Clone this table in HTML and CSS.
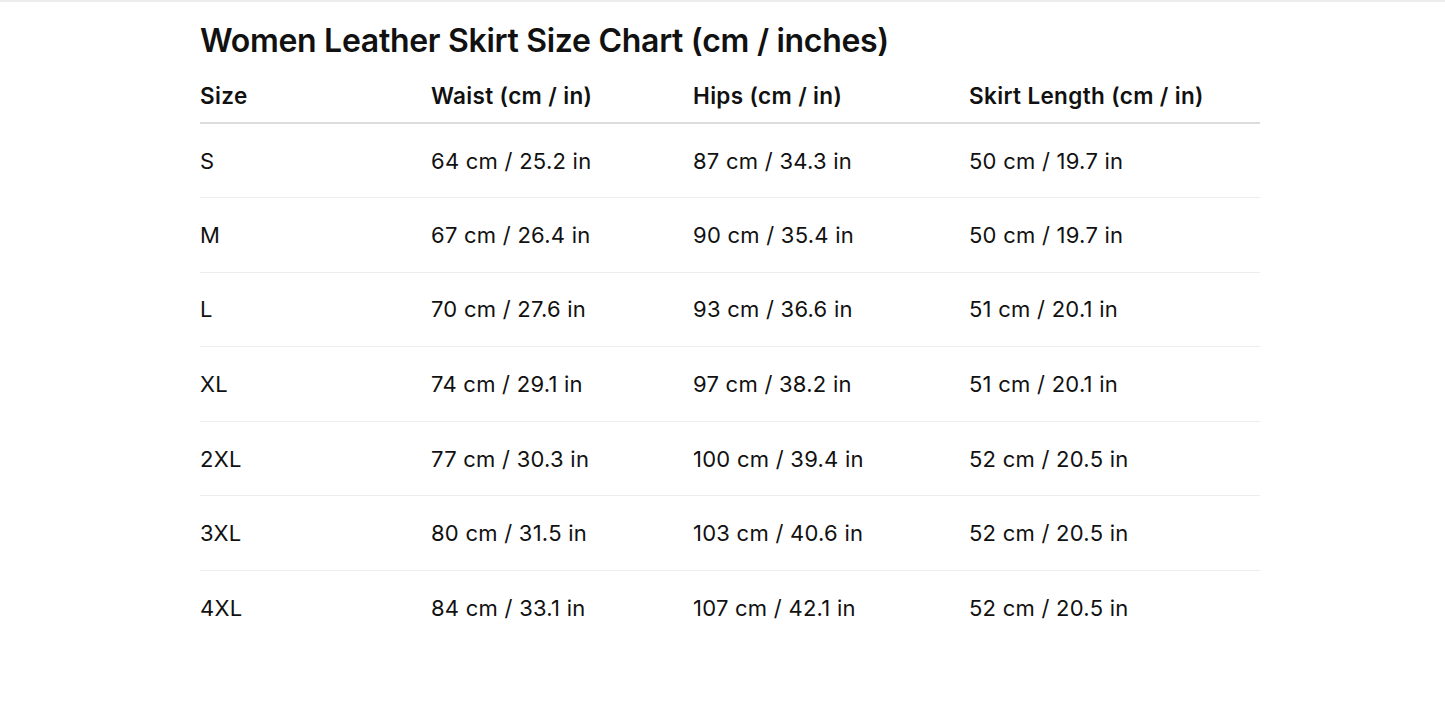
FILE: index.html
```html
<!DOCTYPE html>
<html>
<head>
<meta charset="utf-8">
<link rel="stylesheet" href="styles.css">
</head>
<body>
<div class="page">
  <h1 class="title">Women Leather Skirt Size Chart (cm / inches)</h1>
  <table class="chart">
    <colgroup>
      <col class="c1"><col class="c2"><col class="c3"><col class="c4">
    </colgroup>
    <thead>
      <tr><th>Size</th><th>Waist (cm / in)</th><th>Hips (cm / in)</th><th>Skirt Length (cm / in)</th></tr>
    </thead>
    <tbody>
      <tr><td>S</td><td>64 cm / 25.2 in</td><td>87 cm / 34.3 in</td><td>50 cm / 19.7 in</td></tr>
      <tr><td>M</td><td>67 cm / 26.4 in</td><td>90 cm / 35.4 in</td><td>50 cm / 19.7 in</td></tr>
      <tr><td>L</td><td>70 cm / 27.6 in</td><td>93 cm / 36.6 in</td><td>51 cm / 20.1 in</td></tr>
      <tr><td>XL</td><td>74 cm / 29.1 in</td><td>97 cm / 38.2 in</td><td>51 cm / 20.1 in</td></tr>
      <tr><td>2XL</td><td>77 cm / 30.3 in</td><td>100 cm / 39.4 in</td><td>52 cm / 20.5 in</td></tr>
      <tr><td>3XL</td><td>80 cm / 31.5 in</td><td>103 cm / 40.6 in</td><td>52 cm / 20.5 in</td></tr>
      <tr><td>4XL</td><td>84 cm / 33.1 in</td><td>107 cm / 42.1 in</td><td>52 cm / 20.5 in</td></tr>
    </tbody>
  </table>
</div>
</body>
</html>
```

FILE: styles.css
```css
html, body {
  margin: 0;
  padding: 0;
  background: #fff;
}
body {
  font-family: Inter, "Liberation Sans", sans-serif;
  color: #111;
  border-top: 2px solid #ececec;
}
.page {
  padding: 0 0 0 200px;
}
.title {
  margin: 0;
  padding-top: 18px;
  font-size: 32px;
  line-height: 42px;
  font-weight: 600;
  letter-spacing: -0.3px;
}
.chart {
  border-collapse: collapse;
  table-layout: fixed;
  width: 1060px;
}
.c1 { width: 231px; }
.c2 { width: 262px; }
.c3 { width: 276px; }
.c4 { width: 291px; }
.chart th {
  text-align: left;
  font-weight: 600;
  font-size: 22.5px;
  letter-spacing: 0.35px;
  line-height: 26px;
  height: 61px;
  vertical-align: bottom;
  padding: 0 0 13px 0;
  border-bottom: 2px solid #dcdcdc;
  box-sizing: border-box;
}
.chart td {
  font-size: 22px;
  letter-spacing: 0.25px;
  line-height: 26px;
  padding: 0;
  height: 74.6px;
  vertical-align: middle;
  border-bottom: 1px solid #ededed;
  box-sizing: border-box;
}
.chart tbody tr:last-child td {
  border-bottom: none;
}
```
